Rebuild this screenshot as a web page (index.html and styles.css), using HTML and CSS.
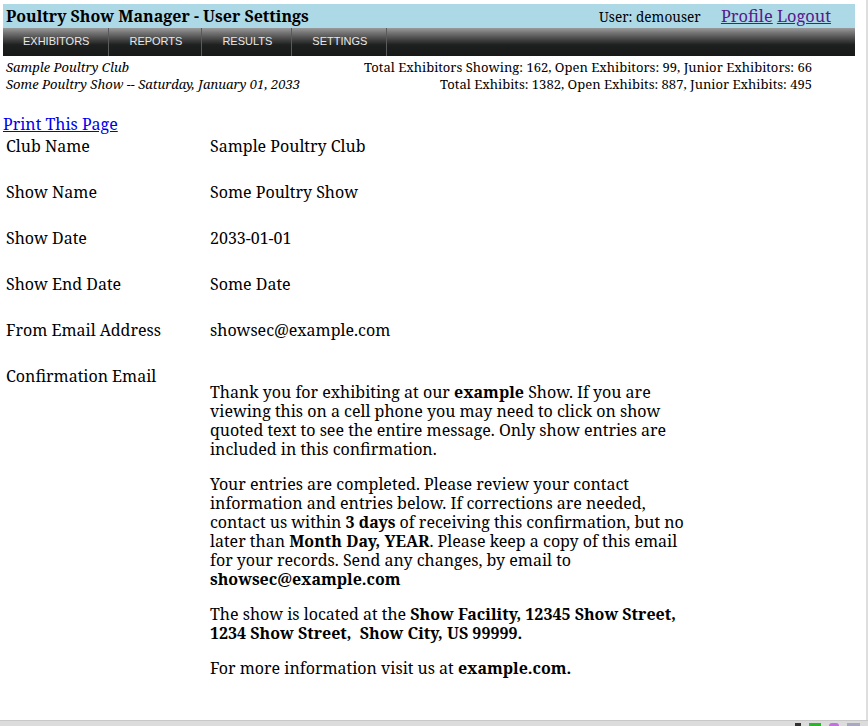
FILE: index.html
```
<!DOCTYPE html>
<html lang="en">
<head>
    <meta charset="UTF-8">
    <title>Poultry Show Manager - User Settings</title>
    <link rel="stylesheet" href="styles.css">
</head>
<body>
    <div class="page">
        <!-- title bar -->
        <div class="topbar">
            <h1 class="title">Poultry Show Manager - User Settings</h1>
            <div class="user-box">
                <span class="user-name">User: demouser</span>
                <a href="#" class="visited">Profile</a> <a href="#" class="visited">Logout</a>
            </div>
        </div>

        <!-- main menu -->
        <ul class="menu">
            <li><a href="#">EXHIBITORS</a></li>
            <li><a href="#">REPORTS</a></li>
            <li><a href="#">RESULTS</a></li>
            <li><a href="#">SETTINGS</a></li>
        </ul>

        <!-- show summary -->
        <div class="summary">
            <div class="summary-left">
                <div>Sample Poultry Club</div>
                <div>Some Poultry Show -- Saturday, January 01, 2033</div>
            </div>
            <div class="summary-right">
                <div>Total Exhibitors Showing: 162, Open Exhibitors: 99, Junior Exhibitors: 66</div>
                <div>Total Exhibits: 1382, Open Exhibits: 887, Junior Exhibits: 495</div>
            </div>
        </div>

        <a href="#" class="print-link">Print This Page</a>

        <table class="settings">
            <tr>
                <td class="label">Club Name</td>
                <td>Sample Poultry Club</td>
            </tr>
            <tr>
                <td class="label">Show Name</td>
                <td>Some Poultry Show</td>
            </tr>
            <tr>
                <td class="label">Show Date</td>
                <td>2033-01-01</td>
            </tr>
            <tr>
                <td class="label">Show End Date</td>
                <td>Some Date</td>
            </tr>
            <tr>
                <td class="label">From Email Address</td>
                <td>showsec@example.com</td>
            </tr>
            <tr>
                <td class="label">Confirmation Email</td>
                <td class="email-body">
                    <p>Thank you for exhibiting at our <b>example</b> Show. If you are viewing this on a cell phone you may need to click on show quoted text to see the entire message. Only show entries are included in this confirmation.</p>
                    <p>Your entries are completed. Please review your contact information and entries below. If corrections are needed, contact us within <b>3 days</b> of receiving this confirmation, but no later than <b>Month Day, YEAR</b>. Please keep a copy of this email for your records. Send any changes, by email to <b>showsec@example.com</b></p>
                    <p>The show is located at the <b>Show Facility, 12345 Show Street, 1234 Show Street,&nbsp; Show City, US 99999.</b></p>
                    <p>For more information visit us at <b>example.com.</b></p>
                </td>
            </tr>
        </table>
    </div>

    <!-- window status strip -->
    <div class="statusbar">
        <span class="tray tray-dark"></span>
        <span class="tray tray-green"></span>
        <span class="tray tray-purple"></span>
        <span class="tray tray-grey"></span>
    </div>
</body>
</html>
```

FILE: styles.css
```
html, body {
    height: 100%;
}

body {
    margin: 0;
    background-color: #fff;
    font-family: "Noto Serif", "DejaVu Serif", serif;
    font-size: 16px;
    color: #000;
    overflow: hidden;
}

.page {
    padding: 4px 11px 0 3px;
    border-right: 2px solid #dedede;
    height: 100%;
    box-sizing: border-box;
}

.topbar {
    display: flex;
    align-items: center;
    justify-content: space-between;
    background-color: #add8e6;
    height: 24px;
    padding: 0 24px 0 3px;
}

.title {
    margin: 0;
    font-size: 16px;
    font-weight: bold;
}

.user-box {
    white-space: nowrap;
    line-height: 22px;
}

.user-name {
    font-size: 13.6px;
    margin-right: 16px;
}

.user-box a {
    font-size: 16.4px;
}

a.visited {
    color: #551a8b;
}

.menu {
    display: flex;
    list-style: none;
    margin: 0;
    padding: 0;
    height: 28px;
    background: linear-gradient(to bottom, #9a9a9a 0%, #6e6e6e 20%, #3c3c3c 45%, #1e2020 60%, #161918 100%);
}

.menu li {
    border-right: 1px solid #5a5a5a;
}

.menu a {
    display: block;
    padding: 0 19px 0 20px;
    line-height: 26px;
    font-family: "Liberation Sans", Arial, sans-serif;
    font-size: 11px;
    color: #e8e8e8;
    text-decoration: none;
}

.summary {
    display: flex;
    justify-content: space-between;
    padding: 3px 43px 0 3px;
    font-size: 13px;
    line-height: 17px;
}

.summary-left {
    font-style: italic;
}

.summary-right {
    text-align: right;
}

.print-link {
    display: inline-block;
    margin-top: 22px;
    color: #0000ee;
    line-height: 19px;
}

.settings {
    border-collapse: separate;
    border-spacing: 2px;
    margin-top: -1px;
}

.settings td {
    vertical-align: top;
    padding: 1px 1px 24px;
    line-height: 19px;
}

.settings td.label {
    width: 200px;
}

.email-body {
    width: 480px;
}

.email-body p {
    margin: 16px 0;
}

.statusbar {
    position: fixed;
    left: 0;
    right: 0;
    bottom: 0;
    height: 5px;
    display: flex;
    justify-content: flex-end;
    align-items: flex-end;
    gap: 8px;
    padding-right: 8px;
    background-color: #dcdcdc;
    border-top: 1px solid #c8c8c8;
}

.tray {
    width: 10px;
    height: 3px;
}

.tray-dark {
    width: 6px;
    background-color: #333;
}

.tray-green {
    width: 12px;
    background-color: #2bb52b;
}

.tray-purple {
    border-radius: 5px 5px 0 0;
    background-color: #c070e0;
}

.tray-grey {
    width: 13px;
    background-color: #a8a8c0;
}
```
